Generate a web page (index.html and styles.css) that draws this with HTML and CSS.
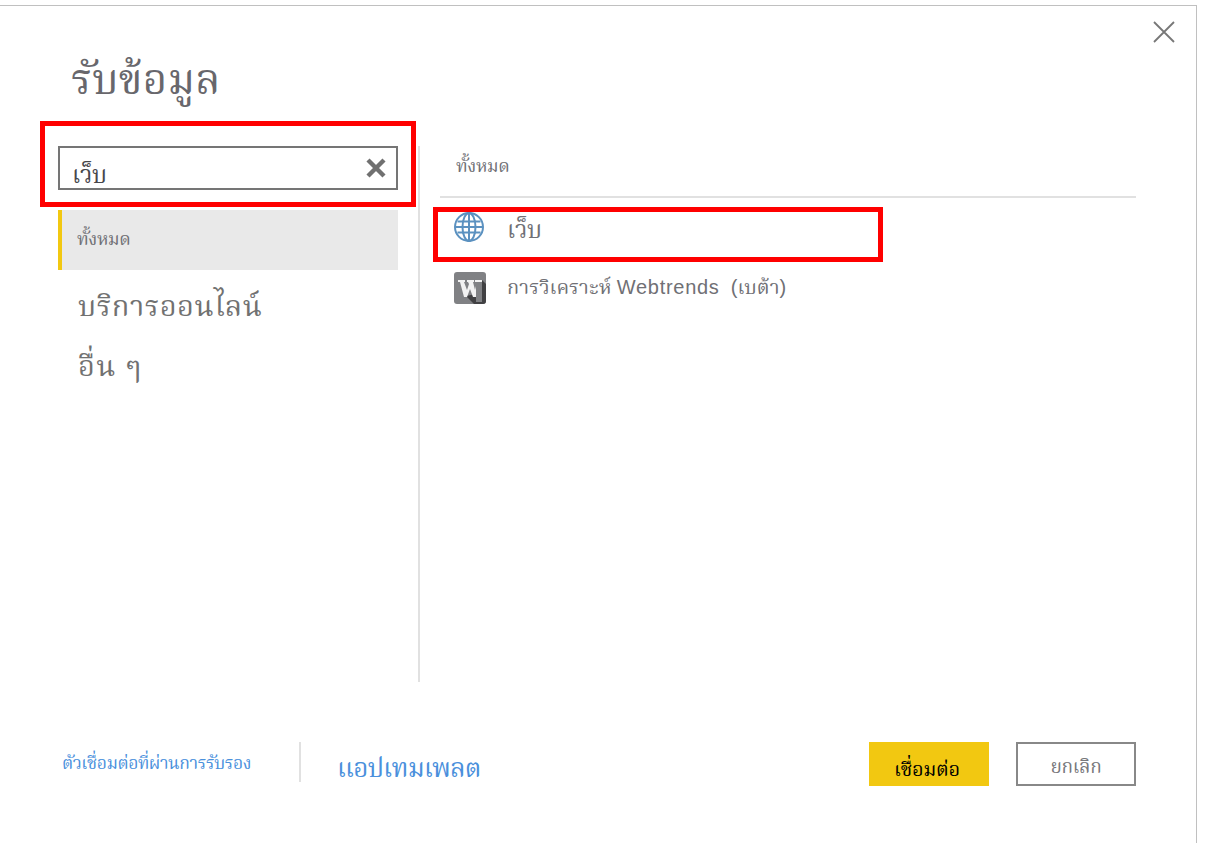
FILE: index.html
```html
<!DOCTYPE html>
<html lang="th">
<head>
<meta charset="utf-8">
<title>รับข้อมูล</title>
<link rel="stylesheet" href="styles.css">
</head>
<body>
<div class="dialog">
  <header class="header">
    <h1 class="title"><span>รับข้อมูล</span></h1>
    <button class="close" aria-label="ปิด"><svg width="22" height="22" viewBox="0 0 22 22"><path d="M1 1L21 21M21 1L1 21" stroke="#777" stroke-width="1.8"/></svg></button>
  </header>
  <main class="main">
    <aside class="sidebar">
      <div class="search">
        <span class="query">เว็บ</span>
        <svg width="20" height="20" viewBox="0 0 20 20"><path d="M2 2L18 18M18 2L2 18" stroke="#707070" stroke-width="4.4"/></svg>
      </div>
      <nav class="nav">
        <a class="nav-item active"><span>ทั้งหมด</span></a>
        <a class="nav-item services"><span>บริการออนไลน์</span></a>
        <a class="nav-item other"><span>อื่น ๆ</span></a>
      </nav>
    </aside>
    <section class="content">
      <h2 class="subtitle"><span>ทั้งหมด</span></h2>
      <div class="row">
        <svg width="32" height="32" viewBox="0 0 32 32" fill="none" stroke="#5b91c0" stroke-width="2"><circle cx="15" cy="15" r="14"/><ellipse cx="15" cy="15" rx="6.5" ry="14"/><path d="M15 1V29M1 15H29M3.5 9.5H26.5M3.5 20.5H26.5"/></svg>
        <span class="web">เว็บ</span>
      </div>
      <div class="row">
        <svg width="32" height="32" viewBox="0 0 32 32"><rect width="32" height="32" rx="3" fill="#808184"/><path d="M28 8L32 12V29Q32 32 29 32H20L12 24L22 22Z" fill="#414143"/><path d="M4 8H11V10H10L13 18L15 12L14 10H13V8H20V10H19L21 18L23 10H21V8H28V10H27L22 25H19L16 17L13 25H10L6 10H4Z" fill="#f2f2f2"/><path d="M22 10H28V30H22Z" fill="#808184"/></svg>
        <span class="webtrends">การวิเคราะห์ <span class="latin">Webtrends</span>&nbsp; (เบต้า)</span>
      </div>
    </section>
  </main>
  <footer class="footer">
    <a class="link certified"><span>ตัวเชื่อมต่อที่ผ่านการรับรอง</span></a>
    <a class="link templates"><span>แอปเทมเพลต</span></a>
    <button class="button primary"><span>เชื่อมต่อ</span></button>
    <button class="button secondary"><span>ยกเลิก</span></button>
  </footer>
  <div class="highlight search-highlight"></div>
  <div class="highlight web-highlight"></div>
</div>
</body>
</html>
```
FILE: styles.css
```css
* { box-sizing: border-box; }
body { margin: 0; height: 843px; overflow: hidden; background: #fff; padding-top: 5px; font-family: "Liberation Sans", Norasi, Kinnari, "Noto Serif Thai", "Noto Sans Thai Looped", Loma, Garuda, FreeSerif, sans-serif; color: #707075; }
.dialog { position: relative; width: 1197px; height: 838px; border-top: 1px solid #c0c0c0; border-right: 1px solid #c0c0c0; }
span { white-space: nowrap; }
h1, h2 { margin: 0; font-weight: 400; }
button { padding: 0; border: 0; background: none; font-family: inherit; }
.header { display: flex; justify-content: space-between; height: 140px; padding: 15px 21px 0 71px; }
.title { padding-top: 31px; font-size: 42px; line-height: 56px; letter-spacing: .3px; color: #68676c; }
.close { width: 22px; height: 22px; }
.close svg { display: block; }
.main { display: flex; height: 536px; padding-left: 58px; }
.sidebar { width: 362px; padding-right: 20px; border-right: 2px solid #e1e1e1; }
.search { display: flex; justify-content: space-between; align-items: center; height: 44px; padding: 0 10px 0 12px; border: 2px solid #757575; }
.query { padding-top: 13px; font-size: 24px; line-height: 30px; letter-spacing: -.3px; color: #47474c; }
.nav { padding-top: 20px; }
.nav-item { display: flex; align-items: center; height: 60px; padding-left: 20px; }
.active { padding: 0 0 0 15px; border-left: 4px solid #f2c811; background: #e9e9e9; font-size: 18px; letter-spacing: -.4px; }
.services, .other { font-size: 29px; color: #717171; padding-top: 15px; letter-spacing: .55px; }
.other { letter-spacing: 1.3px; }
.content { width: 696px; margin-left: 20px; }
.subtitle { height: 52px; margin-bottom: 14px; padding: 8px 0 0 16px; border-bottom: 2px solid #e1e1e1; font-size: 18px; line-height: 24px; letter-spacing: -.4px; }
.row { display: flex; height: 60px; padding-left: 14px; gap: 21px; }
.web { font-size: 24px; line-height: 35px; letter-spacing: -.3px; }
.webtrends { font-size: 20px; line-height: 30px; letter-spacing: .05px; }
.latin { letter-spacing: .7px; }
.footer { display: flex; height: 104px; padding: 60px 60px 0 62px; }
.link { color: #4a90dc; }
.certified { width: 239px; height: 40px; border-right: 2px solid #e1e1e1; font-size: 17.5px; line-height: 42px; letter-spacing: -.43px; }
.templates { margin-left: 36px; font-size: 26px; line-height: 52px; letter-spacing: -.75px; }
.button { width: 120px; height: 44px; font-size: 19px; line-height: 44px; padding-top: 5px; }
.primary { margin-left: auto; background: #f2c811; color: #000; font-size: 20px; padding-right: 4px; letter-spacing: -.3px; }
.secondary { margin-left: 27px; border: 2px solid #888; color: #77777b; line-height: 36px; letter-spacing: -.3px; }
.highlight { position: absolute; border: 5px solid #f00; pointer-events: none; }
.search-highlight { left: 40px; top: 115px; width: 376px; height: 86px; }
.web-highlight { left: 433px; top: 201px; width: 450px; height: 55px; }
```
